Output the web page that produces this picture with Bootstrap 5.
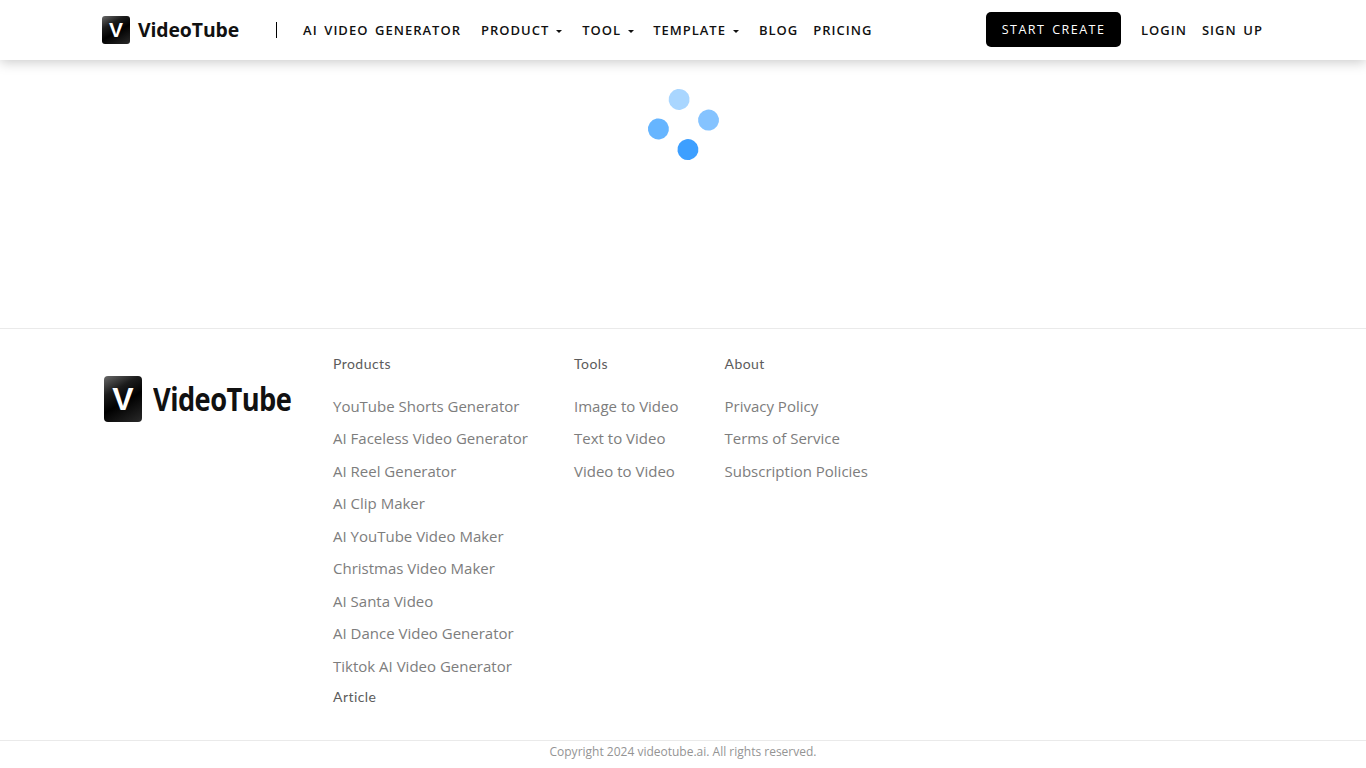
<!DOCTYPE html>
<html lang="en">
<head>
  <meta charset="UTF-8">
  <meta name="viewport" content="width=device-width, initial-scale=1.0">
  <title>VideoTube</title>
  <link href="https://cdn.jsdelivr.net/npm/bootstrap@5.3.3/dist/css/bootstrap.min.css" rel="stylesheet">
  <script src="https://cdn.jsdelivr.net/npm/bootstrap@5.3.3/dist/js/bootstrap.bundle.min.js" defer></script>
  <style>
    body {
      font-family: "Open Sans", sans-serif;
      background: #fff;
      height: 768px;
      overflow: hidden;
    }
    .top-bar {
      height: 60px;
      padding: 0 103px 0 102px;
      box-shadow: 0 2px 12px rgba(0, 0, 0, .22);
      position: relative;
    }
    .logo-mark {
      background: linear-gradient(150deg, #6a6a6a 0%, #1c1c1c 30%, #000 55%, #2a2a2a 100%);
      color: #fff;
      font-family: "Liberation Sans", sans-serif;
      font-weight: 700;
      display: flex;
      align-items: center;
      justify-content: center;
      flex: none;
    }
    .logo-top .logo-mark {
      width: 28px;
      height: 28px;
      border-radius: 3px;
      font-size: 21px;
    }
    .logo-top .logo-name {
      font-size: 19.4px;
      font-weight: 700;
      margin-left: 8px;
      color: #111;
      letter-spacing: -.1px;
    }
    .logo-foot .logo-mark {
      width: 38px;
      height: 46px;
      border-radius: 4px;
      font-size: 32px;
    }
    .logo-foot .logo-name {
      font-size: 30px;
      font-weight: 700;
      margin-left: 11px;
      color: #111;
      letter-spacing: -.6px;
      transform: scale(.908, 1.06);
      transform-origin: left center;
    }
    .nav-sep {
      width: 1px;
      height: 16px;
      background: #000;
      margin: 0 26px 0 37px;
    }
    .top-link {
      font-size: 13px;
      font-weight: 600;
      letter-spacing: 1px;
      word-spacing: 2.3px;
      padding-top: 2px;
      color: #111;
      text-decoration: none;
      white-space: nowrap;
    }
    .top-link.dropdown-toggle::after {
      margin-left: 7px;
      vertical-align: 2px;
      border-top-width: 3px;
      border-right-width: 3px;
      border-left-width: 3px;
    }
    .link-gap-20 { margin-left: 20px; }
    .link-gap-19 { margin-left: 19px; }
    .link-gap-15 { margin-left: 15px; }
    .start-btn {
      background: #000;
      color: #fff;
      font-size: 12.5px;
      font-weight: 500;
      letter-spacing: 1.5px;
      word-spacing: 2px;
      width: 135px;
      height: 35px;
      padding: 2px 0 0;
      margin-bottom: 2px;
      border: 0;
      border-radius: 5px;
    }
    .spin-area {
      height: 268px;
      padding-top: 35.5px;
    }
    .spin-dots {
      display: grid;
      grid-template-columns: 21px 21px;
      gap: 15px;
      width: 57px;
      transform: rotate(35deg);
    }
    .spin-dot {
      width: 21px;
      height: 21px;
      border-radius: 50%;
    }
    .dot-a { background: #a9d6ff; }
    .dot-b { background: #85c3ff; }
    .dot-c { background: #66b5ff; }
    .dot-d { background: #3d9fff; }
    .page-foot {
      border-top: 1px solid #eaeaea;
      height: 412px;
      padding: 0 0 0 104px;
    }
    .logo-foot {
      width: 229px;
      padding-top: 47px;
    }
    .foot-col-a { width: 241px; }
    .foot-col-b { width: 150.5px; }
    .foot-head {
      font-family: "Lato", sans-serif;
      font-size: 14px;
      letter-spacing: .45px;
      color: #5c5c5c;
      line-height: 20px;
      margin: 25px 0 15.7px;
    }
    .foot-link {
      display: block;
      font-size: 15px;
      font-weight: 400;
      color: #7d7d7d;
      line-height: 32.5px;
      text-decoration: none;
      white-space: nowrap;
    }
    .foot-article {
      font-family: "Lato", sans-serif;
      font-size: 14px;
      letter-spacing: .45px;
      color: #5c5c5c;
      text-decoration: none;
      display: block;
      line-height: 20px;
      margin-top: 5px;
    }
    .copy-bar {
      border-top: 1px solid #eaeaea;
      font-size: 12px;
      color: #949494;
      line-height: 21px;
    }
  </style>
</head>
<body>
  <nav class="top-bar d-flex align-items-center bg-white">
    <a class="logo-top d-flex align-items-center text-decoration-none" href="#">
      <span class="logo-mark">V</span>
      <span class="logo-name">VideoTube</span>
    </a>
    <span class="nav-sep"></span>
    <a class="top-link" href="#">AI VIDEO GENERATOR</a>
    <a class="top-link dropdown-toggle link-gap-20" href="#">PRODUCT</a>
    <a class="top-link dropdown-toggle link-gap-20" href="#">TOOL</a>
    <a class="top-link dropdown-toggle link-gap-19" href="#">TEMPLATE</a>
    <a class="top-link link-gap-20" href="#">BLOG</a>
    <a class="top-link link-gap-15" href="#">PRICING</a>
    <button class="start-btn btn ms-auto" type="button">START CREATE</button>
    <a class="top-link link-gap-20" href="#">LOGIN</a>
    <a class="top-link link-gap-15" href="#">SIGN UP</a>
  </nav>

  <div class="spin-area d-flex justify-content-center align-items-start">
    <div class="spin-dots">
      <span class="spin-dot dot-a"></span>
      <span class="spin-dot dot-b"></span>
      <span class="spin-dot dot-c"></span>
      <span class="spin-dot dot-d"></span>
    </div>
  </div>

  <footer class="page-foot d-flex">
    <a class="logo-foot d-flex align-items-start text-decoration-none" href="#">
      <span class="logo-mark">V</span>
      <span class="logo-name">VideoTube</span>
    </a>
    <div class="foot-col-a">
      <div class="foot-head">Products</div>
      <a class="foot-link" href="#">YouTube Shorts Generator</a>
      <a class="foot-link" href="#">AI Faceless Video Generator</a>
      <a class="foot-link" href="#">AI Reel Generator</a>
      <a class="foot-link" href="#">AI Clip Maker</a>
      <a class="foot-link" href="#">AI YouTube Video Maker</a>
      <a class="foot-link" href="#">Christmas Video Maker</a>
      <a class="foot-link" href="#">AI Santa Video</a>
      <a class="foot-link" href="#">AI Dance Video Generator</a>
      <a class="foot-link" href="#">Tiktok AI Video Generator</a>
      <a class="foot-article" href="#">Article</a>
    </div>
    <div class="foot-col-b">
      <div class="foot-head">Tools</div>
      <a class="foot-link" href="#">Image to Video</a>
      <a class="foot-link" href="#">Text to Video</a>
      <a class="foot-link" href="#">Video to Video</a>
    </div>
    <div>
      <div class="foot-head">About</div>
      <a class="foot-link" href="#">Privacy Policy</a>
      <a class="foot-link" href="#">Terms of Service</a>
      <a class="foot-link" href="#">Subscription Policies</a>
    </div>
  </footer>
  <div class="copy-bar text-center">Copyright 2024 videotube.ai. All rights reserved.</div>
</body>
</html>
